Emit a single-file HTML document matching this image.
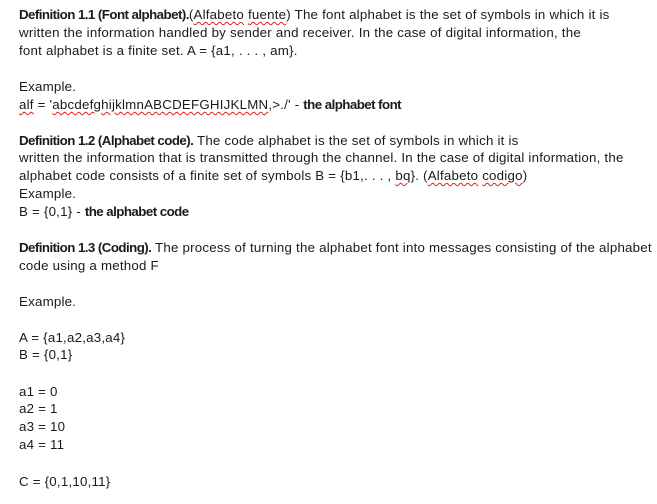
<!DOCTYPE html>
<html><head><meta charset="utf-8"><style>
html,body{margin:0;padding:0;background:#fff;width:657px;height:504px;overflow:hidden}
body{font-family:"Liberation Sans",Arial,sans-serif;font-size:13.3px;letter-spacing:0.22px;color:#1a1a1a;position:relative}
.l{position:absolute;left:19px;white-space:nowrap;line-height:18px}
.s{text-decoration:underline wavy #e02020;text-decoration-thickness:1px;text-underline-offset:2px}
b{font-weight:bold;letter-spacing:-0.55px}
</style></head><body>
<div class="l" style="top:6px"><b>Definition 1.1 (Font alphabet).</b>(<span class="s">Alfabeto</span> <span class="s">fuente</span>) The font alphabet is the set of symbols in which it is</div>
<div class="l" style="top:24px">written the information handled by sender and receiver. In the case of digital information, the</div>
<div class="l" style="top:42px">font alphabet is a finite set. A = {a1, . . . , am}.</div>
<div class="l" style="top:78px">Example.</div>
<div class="l" style="top:96px"><span class="s">alf</span> = '<span class="s">abcdefghijklmnABCDEFGHIJKLMN</span>,&gt;./' - <b>the alphabet font</b></div>
<div class="l" style="top:132px"><b>Definition 1.2 (Alphabet code).</b> The code alphabet is the set of symbols in which it is</div>
<div class="l" style="top:149px">written the information that is transmitted through the channel. In the case of digital information, the</div>
<div class="l" style="top:167px">alphabet code consists of a finite set of symbols B = {b1,. . . , <span class="s">bq</span>}. (<span class="s">Alfabeto</span> <span class="s">codigo</span>)</div>
<div class="l" style="top:185px">Example.</div>
<div class="l" style="top:203px">B = {0,1} - <b>the alphabet code</b></div>
<div class="l" style="top:239px"><b>Definition 1.3 (Coding).</b> The process of turning the alphabet font into messages consisting of the alphabet</div>
<div class="l" style="top:257px">code using a method F</div>
<div class="l" style="top:293px">Example.</div>
<div class="l" style="top:329px">A = {a1,a2,a3,a4}</div>
<div class="l" style="top:346px">B = {0,1}</div>
<div class="l" style="top:383px">a1 = 0</div>
<div class="l" style="top:400px">a2 = 1</div>
<div class="l" style="top:418px">a3 = 10</div>
<div class="l" style="top:436px">a4 = 11</div>
<div class="l" style="top:473px">C = {0,1,10,11}</div>
</body></html>
